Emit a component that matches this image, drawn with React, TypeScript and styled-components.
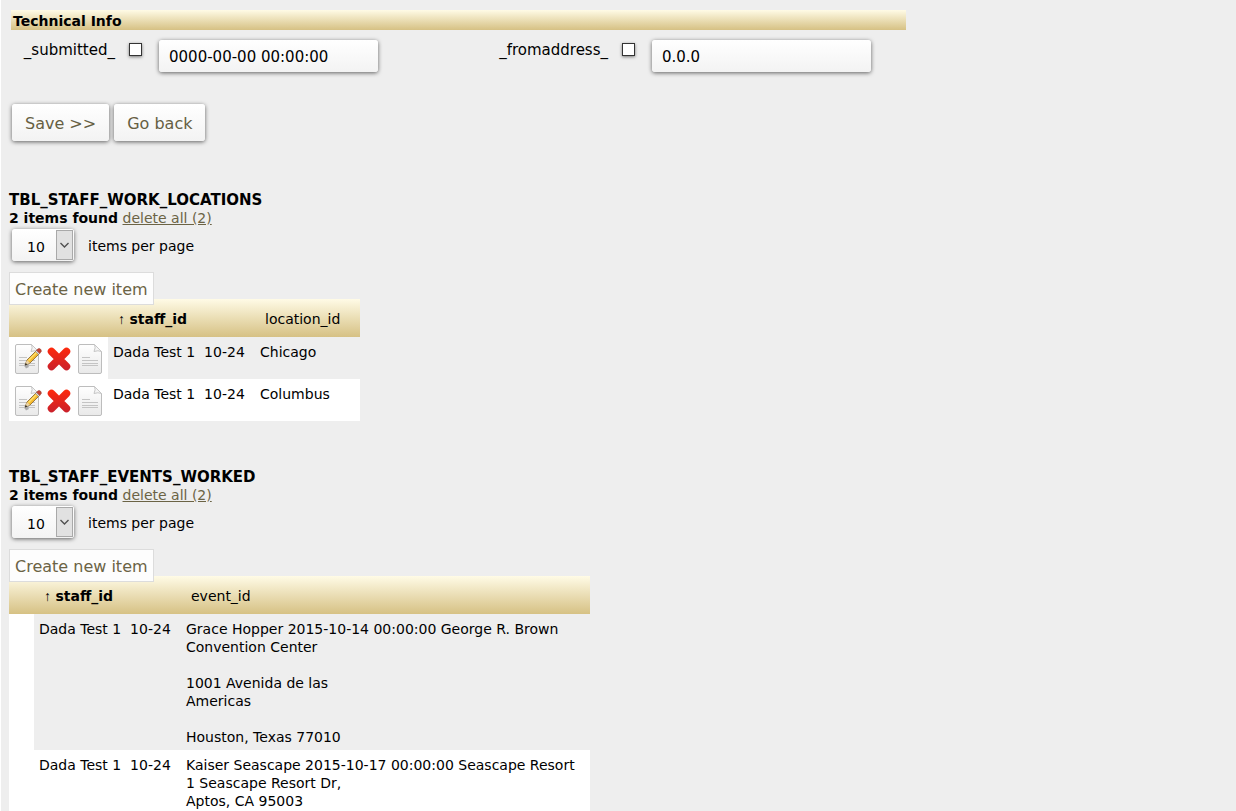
import React from "react";
import styled, { createGlobalStyle } from "styled-components";

const GlobalStyle = createGlobalStyle`
  *, *::before, *::after { box-sizing: border-box; }
  body {
    margin: 0;
    background: #eeeeee;
    color: #000;
    font-family: "DejaVu Sans", Verdana, sans-serif;
    font-size: 14px;
    line-height: 18px;
  }
  input, select, button { font-family: inherit; }
`;

const Page = styled.main`
  border-left: 1px solid #fff;
  padding: 10px 8px 0;
`;

const TechnicalForm = styled.form`
  max-width: 897px;
  padding-left: 2px;
`;

const SectionBar = styled.h2`
  margin: 0;
  padding: 2px 2px 0;
  height: 20px;
  font-size: 14px;
  line-height: 18px;
  background: linear-gradient(#fffbe6, #d6c184);
`;

const Fields = styled.div`
  display: grid;
  grid-template-columns: 104px 44px 219px 230px 44px 219px;
  padding-top: 10px;
`;

const FieldLabel = styled.label`
  text-align: right;
  font-size: 15px;
  padding-top: 1px;
`;

const Check = styled.input`
  appearance: none;
  width: 13px;
  height: 13px;
  margin: 3px 0 0 14px;
  border: 1px solid #333;
  background: #fff;
  box-shadow: 0 1px 3px rgba(0, 0, 0, 0.5);
`;

const raised = `
  border: 0;
  border-radius: 3px;
  background: linear-gradient(#ffffff, #f3f3f3);
  box-shadow: 0 1px 4px rgba(0, 0, 0, 0.6);
`;

const TextBox = styled.input`
  ${raised}
  width: 100%;
  height: 32px;
  padding: 2px 10px 0;
  font-size: 15px;
`;

const Actions = styled.div`
  display: flex;
  gap: 5px;
  padding: 32px 0 0 1px;
`;

const ActionButton = styled.button`
  ${raised}
  height: 37px;
  padding: 2px 13px 0;
  font-size: 16px;
  color: #665f43;
`;

const Listing = styled.section<{ $first?: boolean }>`
  padding-top: ${(p) => (p.$first ? 50 : 47)}px;
`;

const ListingTitle = styled.h3`
  margin: 0;
  font-size: 15px;
  line-height: 18px;
`;

const Summary = styled.p`
  margin: 0;
  a { color: #6b6345; }
`;

const Pager = styled.label`
  display: flex;
  align-items: flex-start;
  gap: 14px;
  padding: 2px 0 0 3px;
  line-height: 34px;
`;

const SelectShell = styled.span`
  ${raised}
  position: relative;
  display: flex;
  width: 62px;
  height: 32px;
`;

const PageSize = styled.select`
  appearance: none;
  width: 100%;
  padding: 3px 0 0 15px;
  border: 0;
  background: transparent;
  font-size: 14px;
`;

const SelectArrow = styled.svg`
  position: absolute;
  right: 1px;
  top: 1px;
  width: 17px;
  height: 30px;
  pointer-events: none;
`;

const CreateLink = styled.a`
  position: relative;
  display: inline-block;
  margin-top: 9px;
  height: 33px;
  padding: 0 5px;
  border: 1px solid #dcdcdc;
  background: #fdfdfd;
  color: #6b6345;
  font-size: 16px;
  line-height: 33px;
  text-decoration: none;
  vertical-align: top;
`;

const DataTable = styled.table<{ $width: number }>`
  width: ${(p) => p.$width}px;
  max-width: 100%;
  margin-top: -6px;
  border-collapse: collapse;
  table-layout: fixed;

  thead tr { background: linear-gradient(#fffbe6, #d6c184); }
  th {
    padding: 11px 10px 9px;
    text-align: left;
    font-weight: normal;
    white-space: nowrap;
  }
  td {
    padding: 6px 5px 4px;
    vertical-align: top;
    white-space: pre;
  }
  tbody tr:nth-child(even), tbody td:first-child { background: #fff; }
  tbody td:first-child { padding: 5px; }
`;

const SortArrow = styled.span`
  font-family: "Liberation Sans", Arial, sans-serif;
`;

const RowTools = styled.div`
  display: flex;
  gap: 4px;
  a { display: block; height: 32px; }
  svg { display: block; }
`;

function Sheet() {
  return (
    <>
      <path d="M4 2.500h14.500l7 7V30q0 1.500-1.500 1.500H4q-1.500 0-1.500-1.500V4Q2.500 2.500 4 2.500Z" fill="url(#paper)" stroke="#bdbdbd" />
      <path d="M18.500 2.500q1.500 3-.5 7 4-1.500 7.500 0Z" fill="#f4f4f4" stroke="#c6c6c6" />
      <path d="M6 15.500h8M6 18.500h16M6 21.500h16M6 23.500h16" stroke="#c4c4c4" />
    </>
  );
}

function IconDefs() {
  return (
    <svg width="0" height="0" style={{ display: "block" }} aria-hidden="true">
      <defs>
        <linearGradient id="paper" x1="0" y1="0" x2="0" y2="1">
          <stop offset="0" stopColor="#fff" />
          <stop offset="1" stopColor="#e9e9e9" />
        </linearGradient>
        <linearGradient id="cross" gradientUnits="userSpaceOnUse" x1="0" y1="5" x2="0" y2="29">
          <stop offset="0" stopColor="#ff2a0c" />
          <stop offset="1" stopColor="#c8202c" />
        </linearGradient>
      </defs>
    </svg>
  );
}

function Tools() {
  return (
    <RowTools>
      <a href="#edit" aria-label="Edit">
        <svg width="28" height="32" viewBox="1 0 28 32">
          <Sheet />
          <path d="M12.500 25.500l3-1.500M12 25l4-4" stroke="#aaa" strokeWidth="2" fill="none" />
          <path d="M14 18l9.500-9.500 3 3-9.500 9.500-5 2Z" fill="#f5b92e" stroke="#80602b" strokeWidth=".8" />
          <path d="M15.500 18.500l8.500-8.500" stroke="#ffe06a" strokeWidth="1.400" />
          <path d="M14 18l3 3-5 2Z" fill="#ead3a6" />
          <path d="M11.800 23.400l1-2.400 1.400 1.400Z" fill="#222" />
          <path d="M22.500 9.500l3 3 1.200-1.200-3-3Z" fill="#ddd" stroke="#777" strokeWidth=".5" />
          <path d="M23.700 8.300l1-1.300q1.500-1 2.700 0t.8 2.700l-1.500 1.600Z" fill="#c84332" stroke="#93382b" strokeWidth=".6" />
        </svg>
      </a>
      <a href="#delete" aria-label="Delete">
        <svg width="26" height="32" viewBox="0 0 26 32">
          <path d="M5.500 9.500l15 15M20.500 9.500l-15 15" stroke="url(#cross)" strokeWidth="7.500" strokeLinecap="round" />
          <path d="M8 17a5 5 0 1 0 10 0a5 5 0 1 0-10 0" fill="url(#cross)" />
        </svg>
      </a>
      <a href="#view" aria-label="View">
        <svg width="27" height="32" viewBox="0 0 27 32">
          <Sheet />
        </svg>
      </a>
    </RowTools>
  );
}

interface Row {
  staff: string;
  value: string;
}

interface ItemListProps {
  title: string;
  column: string;
  width: number;
  toolsWidth: number;
  rows: Row[];
  tools?: boolean;
  first?: boolean;
}

function ItemList({ title, column, width, toolsWidth, rows, tools, first }: ItemListProps) {
  return (
    <Listing $first={first}>
      <ListingTitle>{title}</ListingTitle>
      <Summary>
        <b>2 items found</b> <a href="#delete-all">delete all (2)</a>
      </Summary>
      <Pager>
        <SelectShell>
          <PageSize defaultValue="10">
            <option>10</option>
            <option>20</option>
            <option>50</option>
          </PageSize>
          <SelectArrow viewBox="0 0 17 30" aria-hidden="true">
            <rect x=".5" y=".5" width="16" height="29" fill="#e1e1e1" stroke="#a9a9a9" />
            <path d="M4.500 13l4 4 4-4" fill="none" stroke="#505050" strokeWidth="1.400" />
          </SelectArrow>
        </SelectShell>
        items per page
      </Pager>
      <CreateLink href="#create">Create new item</CreateLink>
      <DataTable $width={width}>
        <colgroup>
          <col width={toolsWidth} />
          <col width={147} />
          <col />
        </colgroup>
        <thead>
          <tr>
            <th />
            <th>
              <SortArrow>↑</SortArrow> <b>staff_id</b>
            </th>
            <th>{column}</th>
          </tr>
        </thead>
        <tbody>
          {rows.map((row) => (
            <tr key={row.value}>
              <td>{tools && <Tools />}</td>
              <td>{row.staff}</td>
              <td>{row.value}</td>
            </tr>
          ))}
        </tbody>
      </DataTable>
    </Listing>
  );
}

const staff = "Dada Test 1  10-24";

const locations: Row[] = [
  { staff, value: "Chicago" },
  { staff, value: "Columbus" },
];

const events: Row[] = [
  {
    staff,
    value:
      "Grace Hopper 2015-10-14 00:00:00 George R. Brown\nConvention Center\n\n1001 Avenida de las\nAmericas\n\nHouston, Texas 77010",
  },
  {
    staff,
    value: "Kaiser Seascape 2015-10-17 00:00:00 Seascape Resort\n1 Seascape Resort Dr,\nAptos, CA 95003",
  },
];

export default function App() {
  return (
    <Page>
      <GlobalStyle />
      <IconDefs />
      <TechnicalForm onSubmit={(e) => e.preventDefault()}>
        <SectionBar>Technical Info</SectionBar>
        <Fields>
          <FieldLabel htmlFor="submitted">_submitted_</FieldLabel>
          <Check type="checkbox" aria-label="Use _submitted_" />
          <TextBox id="submitted" defaultValue="0000-00-00 00:00:00" />
          <FieldLabel htmlFor="fromaddress">_fromaddress_</FieldLabel>
          <Check type="checkbox" aria-label="Use _fromaddress_" />
          <TextBox id="fromaddress" defaultValue="0.0.0" />
        </Fields>
        <Actions>
          <ActionButton type="submit">Save &gt;&gt;</ActionButton>
          <ActionButton type="button">Go back</ActionButton>
        </Actions>
      </TechnicalForm>
      <ItemList first title="TBL_STAFF_WORK_LOCATIONS" column="location_id" width={351} toolsWidth={99} rows={locations} tools />
      <ItemList title="TBL_STAFF_EVENTS_WORKED" column="event_id" width={581} toolsWidth={25} rows={events} />
    </Page>
  );
}
